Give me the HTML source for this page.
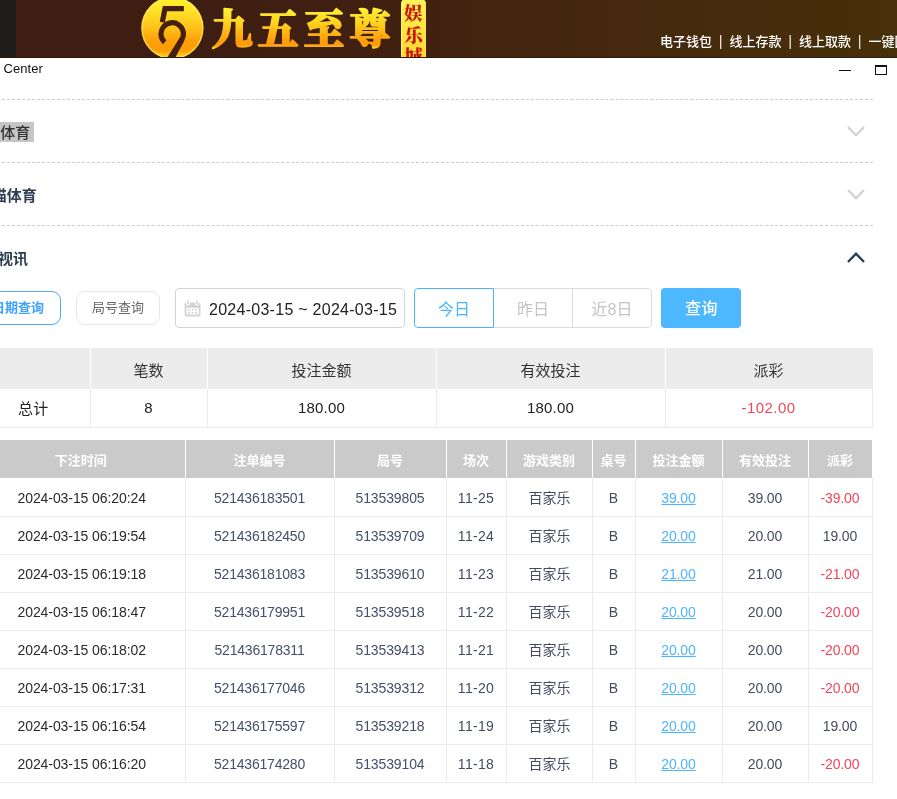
<!DOCTYPE html>
<html lang="zh-CN">
<head>
<meta charset="utf-8">
<title>Center</title>
<style>
*{box-sizing:border-box;margin:0;padding:0}
html,body{width:897px;height:799px;overflow:hidden;background:#fff}
body{font-family:"Liberation Sans","Noto Sans CJK SC",sans-serif;color:#222;position:relative;filter:opacity(1)}
.abs{position:absolute}
/* header */
#hdr{position:absolute;left:0;top:0;width:897px;height:58px;background:linear-gradient(90deg,#3e1e12 0,#3e1e12 200px,#412211 430px,#45290d 660px,#48300a 897px);overflow:hidden;border-bottom:1px solid #2a1a08}
#hdr .stripe{position:absolute;left:0;top:0;width:16px;height:58px;background:#1f1c1c}
#tag{position:absolute;left:401px;top:-1px;width:25px;height:70px;border-radius:5px;background:linear-gradient(180deg,#fff25c 0,#ffe740 40%,#ffd030 100%);box-shadow:inset 1px 0 0 #fff27a,inset -1px 0 0 #ffe24a;font-family:"Noto Serif CJK SC","Liberation Serif",serif;font-weight:900;font-size:18.5px;line-height:21.6px;color:#c8140f;text-align:center;padding-top:3px}
#nav{position:absolute;left:660px;top:33px;font-size:13px;line-height:18px;color:#fff;white-space:nowrap;font-weight:500;font-family:"Liberation Sans","Noto Sans CJK SC",sans-serif}
#nav i{font-style:normal;display:inline-block;width:17.5px;text-align:center;transform:scaleY(1.18) translateY(-0.3px)}
/* title bar */
#ttl{position:absolute;left:3.5px;top:61px;font-size:13px;line-height:15px;color:#111;letter-spacing:0.05px}
#min{position:absolute;left:839px;top:70px;width:12px;height:1px;background:#111}
#max{position:absolute;left:875px;top:65px;width:12px;height:10px;border:1px solid #111;border-top-width:2px}
/* accordion */
.dash{position:absolute;left:2px;width:871px;height:0;border-top:1px dashed #ccc}
.acc{position:absolute;font-size:15px;line-height:20px;font-weight:bold;color:#2c3e50;white-space:nowrap;font-family:"Liberation Sans","Noto Sans CJK SC",sans-serif}
.chev{position:absolute;left:847px;width:18px;height:11px}
/* filter row */
.btn{position:absolute;height:34px;border:1px solid #e6e6e6;border-radius:9px;font-size:13px;line-height:32px;text-align:center;color:#666;background:#fff;white-space:nowrap}
#b1{left:-40px;width:101px;top:291px;border-color:#4fa9ff;color:#3ea2ff;font-weight:bold;text-align:right;padding-right:16px}
#b2{left:76px;width:84px;top:291px}
#date{position:absolute;left:175px;top:288px;width:230px;height:40px;border:1px solid #d4d4d4;border-radius:4px;background:#fff;font-size:16px;line-height:41px;color:#222;padding-left:33px;white-space:nowrap;letter-spacing:0.27px}
#cal{position:absolute;left:184px;top:300px;width:17px;height:17px}
.seg{position:absolute;top:288px;height:40px;border:1px solid #dcdcdc;font-size:16px;line-height:41px;text-align:center;color:#c4c4c4;background:#fff}
#s1{left:414px;width:80px;border-color:#4db4ff;color:#4db4ff;border-radius:4px 0 0 4px;z-index:2}
#s2{left:493px;width:80px;border-left:none;padding-left:1px}
#s3{left:572px;width:80px;border-radius:0 4px 4px 0}
#go{position:absolute;left:661px;top:288px;width:80px;height:40px;border-radius:4px;background:#4db8ff;color:#fff;font-size:16px;line-height:42px;text-align:center;font-weight:500;letter-spacing:0.5px;padding-left:1px}
/* summary table */
table{border-collapse:collapse;table-layout:fixed;position:absolute}
#sum{left:-23px;top:348px;width:895px}
#sum th{height:41px;background:#ececec;font-weight:normal;font-size:15px;color:#333;border-right:1px solid #fff;text-align:center;padding-top:1px}
#sum th:last-child{border-right:1px solid #ececec}
#sum td{height:38px;letter-spacing:0.15px;font-size:15px;color:#222;text-align:center;border-right:1px solid #ebebeb;border-bottom:1px solid #ebebeb}
#sum td.neg{color:#f5455a;letter-spacing:0.45px}
/* main table */
#main{left:-23px;top:440px;width:895px}
#main th{height:38px;background:#cacaca;color:#fff;font-size:13px;font-weight:bold;text-align:center;border-right:1px solid #fff}
#main th:last-child{border-right:1px solid #fff}
#main td{height:38px;font-size:14px;color:#44506a;text-align:center;border-right:1px solid #ebebeb;border-bottom:1px solid #ebebeb;white-space:nowrap}
#main td{letter-spacing:-0.2px;padding-top:2px}
#main td:first-child{color:#2a2a2a;letter-spacing:-0.08px;padding-left:2px}
#main td:nth-child(3){letter-spacing:-0.12px}
#main td:nth-child(4){letter-spacing:0.3px}
#main td:nth-child(5),#main td:nth-child(6){letter-spacing:0}
#main td:nth-child(5){padding-left:1px;padding-top:0}
#main td:nth-child(n+7){letter-spacing:-0.15px}
#main td.neg{color:#f5455a}
#main td.k{color:#434c5e}
#main td a{color:#4db4ff;text-decoration:underline}
</style>
</head>
<body>
<div id="hdr">
  <div class="stripe"></div>
  <svg class="abs" style="left:138px;top:-6px" width="68" height="68" viewBox="138 -6 68 68">
    <defs>
      <linearGradient id="g1" gradientUnits="userSpaceOnUse" x1="0" y1="-3" x2="0" y2="59"><stop offset="0" stop-color="#fff230"/><stop offset="0.25" stop-color="#ffdf26"/><stop offset="0.5" stop-color="#ffc018"/><stop offset="0.72" stop-color="#ff9e08"/><stop offset="0.86" stop-color="#ff9c06"/><stop offset="0.95" stop-color="#ffc81e"/><stop offset="1" stop-color="#ffe838"/></linearGradient>
      <linearGradient id="g2" gradientUnits="userSpaceOnUse" x1="0" y1="-3" x2="0" y2="59"><stop offset="0" stop-color="#fff45a"/><stop offset="0.6" stop-color="#ffd84a"/><stop offset="1" stop-color="#ffe54a"/></linearGradient>
    </defs>
    <circle cx="172.4" cy="28" r="31.2" fill="url(#g2)"/>
    <circle cx="172.4" cy="28" r="29.8" fill="url(#g1)"/>
    <g fill="none" stroke="#43200f" stroke-width="5.2">
      <path d="M183.9 8.6 H165 L162.3 22.2"/>
      <path d="M164.7 42.2 A11.2 11.2 0 1 1 181.95 39.4 L169.4 60.8"/>
    </g>
    <path d="M179.7 38.1 L167.3 57.4 L165.6 60.2 L173.8 60.2 L175.4 57.4 L184.2 40.7 Z" fill="#43200f"/>
  </svg>
  <svg class="abs" style="left:200px;top:0" width="200" height="58" viewBox="0 0 200 58">
    <defs><linearGradient id="gg" gradientUnits="userSpaceOnUse" x1="0" y1="8" x2="0" y2="48"><stop offset="0" stop-color="#fff236"/><stop offset="0.35" stop-color="#ffd420"/><stop offset="0.8" stop-color="#ff9e0c"/><stop offset="0.93" stop-color="#ff9a0a"/><stop offset="1" stop-color="#ffd22a"/></linearGradient></defs>
    <text x="11.7" y="43.5" font-family="'Noto Serif CJK SC','Liberation Serif',serif" font-weight="900" font-size="41" letter-spacing="4.9" fill="url(#gg)" stroke="url(#gg)" stroke-width="1.7" stroke-linejoin="round">九五至尊</text>
  </svg>
  <div id="tag">娱<br>乐<br>城</div>
  <div id="nav">电子钱包<i>|</i>线上存款<i>|</i>线上取款<i>|</i>一键回收</div>
</div>

<div id="ttl">Center</div>
<div id="min"></div><div id="max"></div>

<div class="dash" style="top:99px"></div>
<div class="abs" style="left:-30px;top:122px;width:64px;height:20px;background:#c6c6c6"></div>
<div class="acc" style="left:-31.3px;top:123px;color:#333;font-weight:500"><span style="margin-right:1.5px">皇冠</span>体育</div>
<svg class="chev" style="top:125.6px" viewBox="0 0 18 11"><path d="M1 1 L9 9.3 L17 1" fill="none" stroke="#cfcfcf" stroke-width="2"/></svg>
<div class="dash" style="top:162px"></div>
<div class="acc" style="left:-23.3px;top:186px">熊猫体育</div>
<svg class="chev" style="top:188.6px" viewBox="0 0 18 11"><path d="M1 1 L9 9.3 L17 1" fill="none" stroke="#cfcfcf" stroke-width="2"/></svg>
<div class="dash" style="top:225px"></div>
<div class="acc" style="left:-24.5px;top:248.6px">AG视讯</div>
<svg class="chev" style="top:252px" viewBox="0 0 18 11"><path d="M1 10 L9 1.7 L17 10" fill="none" stroke="#2c3e50" stroke-width="2.4"/></svg>

<div class="btn" id="b1">日期查询</div>
<div class="btn" id="b2">局号查询</div>
<div id="date">2024-03-15 ~ 2024-03-15</div>
<svg id="cal" viewBox="0 0 17 17"><rect x="0.6" y="2.4" width="15.9" height="14" rx="1.6" fill="#d3d3d3"/><rect x="2.4" y="7.8" width="12.4" height="6.7" fill="#fff"/><g fill="#d0d0d0"><rect x="4.1" y="9" width="1.7" height="1.6"/><rect x="7.7" y="9" width="1.7" height="1.6"/><rect x="11.3" y="9" width="1.7" height="1.6"/><rect x="4.1" y="12" width="1.7" height="1.6"/><rect x="7.7" y="12" width="1.7" height="1.6"/><rect x="11.3" y="12" width="1.7" height="1.6"/></g><rect x="2.1" y="0" width="3.7" height="5.6" rx="1.85" fill="#fff"/><rect x="11.2" y="0" width="3.7" height="5.6" rx="1.85" fill="#fff"/><rect x="3.2" y="0.3" width="1.5" height="4.2" rx="0.75" fill="#d0d0d0"/><rect x="12.3" y="0.3" width="1.5" height="4.2" rx="0.75" fill="#d0d0d0"/></svg>
<div class="seg" id="s3">近8日</div>
<div class="seg" id="s2">昨日</div>
<div class="seg" id="s1">今日</div>
<div id="go">查询</div>

<table id="sum">
<colgroup><col style="width:113px"><col style="width:117px"><col style="width:229px"><col style="width:229px"><col style="width:207px"></colgroup>
<tr><th></th><th>笔数</th><th>投注金额</th><th>有效投注</th><th>派彩</th></tr>
<tr><td>总计</td><td>8</td><td>180.00</td><td>180.00</td><td class="neg">-102.00</td></tr>
</table>

<table id="main">
<colgroup><col style="width:208px"><col style="width:149px"><col style="width:112px"><col style="width:60px"><col style="width:86px"><col style="width:43px"><col style="width:87px"><col style="width:86px"><col style="width:64px"></colgroup>
<tr><th>下注时间</th><th>注单编号</th><th>局号</th><th>场次</th><th>游戏类别</th><th>桌号</th><th>投注金额</th><th>有效投注</th><th>派彩</th></tr>
<tr><td>2024-03-15 06:20:24</td><td>521436183501</td><td>513539805</td><td class="k">11-25</td><td class="k">百家乐</td><td class="k">B</td><td><a>39.00</a></td><td class="k">39.00</td><td class="neg">-39.00</td></tr>
<tr><td>2024-03-15 06:19:54</td><td>521436182450</td><td>513539709</td><td class="k">11-24</td><td class="k">百家乐</td><td class="k">B</td><td><a>20.00</a></td><td class="k">20.00</td><td class="k">19.00</td></tr>
<tr><td>2024-03-15 06:19:18</td><td>521436181083</td><td>513539610</td><td class="k">11-23</td><td class="k">百家乐</td><td class="k">B</td><td><a>21.00</a></td><td class="k">21.00</td><td class="neg">-21.00</td></tr>
<tr><td>2024-03-15 06:18:47</td><td>521436179951</td><td>513539518</td><td class="k">11-22</td><td class="k">百家乐</td><td class="k">B</td><td><a>20.00</a></td><td class="k">20.00</td><td class="neg">-20.00</td></tr>
<tr><td>2024-03-15 06:18:02</td><td>521436178311</td><td>513539413</td><td class="k">11-21</td><td class="k">百家乐</td><td class="k">B</td><td><a>20.00</a></td><td class="k">20.00</td><td class="neg">-20.00</td></tr>
<tr><td>2024-03-15 06:17:31</td><td>521436177046</td><td>513539312</td><td class="k">11-20</td><td class="k">百家乐</td><td class="k">B</td><td><a>20.00</a></td><td class="k">20.00</td><td class="neg">-20.00</td></tr>
<tr><td>2024-03-15 06:16:54</td><td>521436175597</td><td>513539218</td><td class="k">11-19</td><td class="k">百家乐</td><td class="k">B</td><td><a>20.00</a></td><td class="k">20.00</td><td class="k">19.00</td></tr>
<tr><td>2024-03-15 06:16:20</td><td>521436174280</td><td>513539104</td><td class="k">11-18</td><td class="k">百家乐</td><td class="k">B</td><td><a>20.00</a></td><td class="k">20.00</td><td class="neg">-20.00</td></tr>
</table>
</body>
</html>
